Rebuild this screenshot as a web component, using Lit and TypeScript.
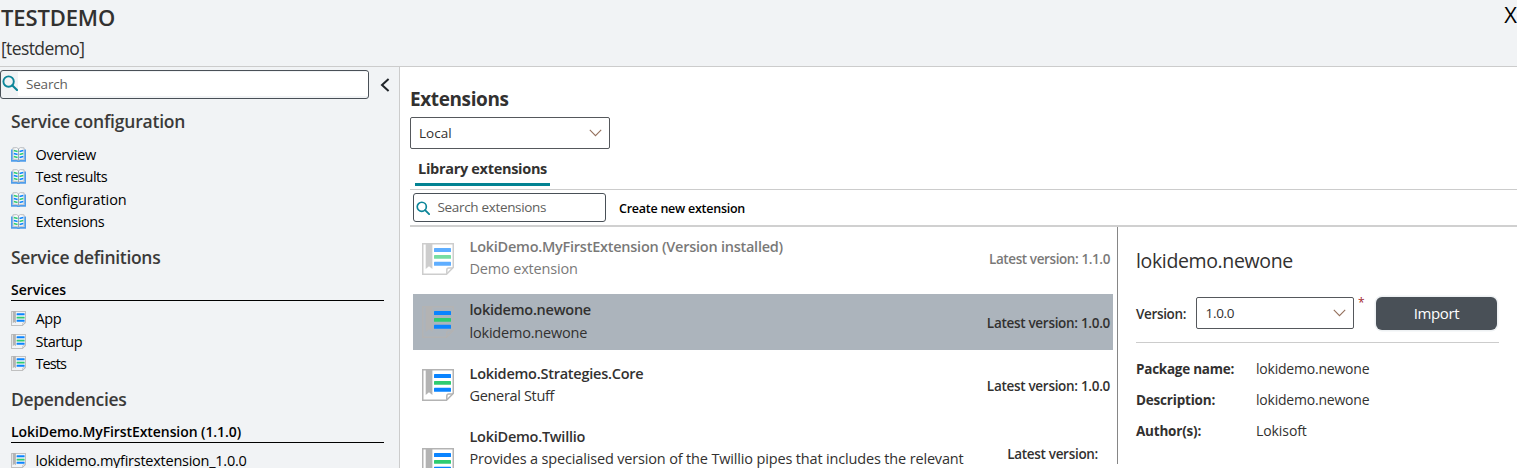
import { LitElement, html, css, svg, unsafeCSS } from "lit";
import { customElement } from "lit/decorators.js";

/* Tracking classes: .k25 tightens the text by 0.25px per letter. */
const tracking = unsafeCSS(
  Array.from({ length: 100 }, (_, i) => `.k${i + 1}{letter-spacing:-${(i + 1) / 100}px}`).join("")
);

const searchIcon = (size: number) => html`
  <svg class="glass" width=${size} height=${size} viewBox="0 0 16 16">
    <circle cx="6.6" cy="6.6" r="5.2" fill="none" stroke="#0c8599" stroke-width="1.9" />
    <path d="M10.4 10.4 L15 15" stroke="#0c8599" stroke-width="2.1" stroke-linecap="round" />
  </svg>`;

const chevronDown = html`
  <svg class="down" width="13" height="8" viewBox="0 0 13 8">
    <path d="M0.8 0.9 L6.5 6.6 L12.2 0.9" fill="none" stroke="#94705c" stroke-width="1.1" />
  </svg>`;

const noteIcon = (size: number) => html`
  <svg class="note" width=${size} height=${size} viewBox="0 0 32 32">
    <path d="M0.75 0.75 H31.25 V24.5 L24.5 31.25 H0.75 Z" fill="none" stroke="#b3b3b3" stroke-width=${size < 20 ? 2 : 1.5} />
    <path d="M24.8 31 V27 Q24.8 25 26.8 25 H31" fill="none" stroke="#b3b3b3" stroke-width="1.5" />
    <path d="M3.7 0 H10.4 V26 L7 23.2 L3.7 26 Z" fill="#b3b3b3" />
    <rect x="12" y="5" width="17" height="4" rx="0.6" fill="#0a84ff" />
    <rect x="12" y="12" width="17" height="3.8" rx="0.6" fill="#2ecc71" />
    <rect x="12" y="18.8" width="17" height="4" rx="0.6" fill="#0a84ff" />
  </svg>`;

const bookLines = [3.4, 6.4, 9.4].map((y, i) => svg`
  <path d="M2.8 ${y} L6.6 ${y + 1}" stroke=${i % 2 ? "#0a84ff" : "#2ecc71"} stroke-width="1.6" />
  <path d="M8.5 ${y + 1} L12.3 ${y}" stroke=${i % 2 ? "#2ecc71" : "#0a84ff"} stroke-width="1.6" />`);

const bookIcon = html`
  <svg class="note" width="15" height="15" viewBox="0 0 15 15">
    <path d="M1.9 0.9 L5.6 0.6 L7.5 1.8 L9.4 0.6 L13.1 0.9 V12.2 L9.2 12.4 L7.5 13.4 L5.8 12.4 L1.9 12.2 Z" fill="#f8f9fa" stroke="#b3b7bb" stroke-width="0.9" />
    <path d="M0.8 2.6 V13.9 H6 L7.5 14.5 L9 13.9 H14.2 V2.6" fill="none" stroke="#4f9dea" stroke-width="1.6" />
    <path d="M7.5 1.8 V13.6" stroke="#9aa6b2" stroke-width="1" />
    ${bookLines}
  </svg>`;

const config = [["Overview", "k31"], ["Test results", "k49"], ["Configuration", "k11"], ["Extensions", "k42"]];
const services = [["App", "k40"], ["Startup", "k48"], ["Tests", "k90"]];
const dependencies = [["lokidemo.myfirstextension_1.0.0", "k25"]];

const extensions = [
  { name: "LokiDemo.MyFirstExtension (Version installed)", nk: "k25", text: "Demo extension", tk: "k18", version: "1.1.0", vk: "k40", state: "installed" },
  { name: "lokidemo.newone", nk: "k24", text: "lokidemo.newone", tk: "k20", version: "1.0.0", vk: "k30", state: "selected" },
  { name: "Lokidemo.Strategies.Core", nk: "k24", text: "General Stuff", tk: "k33", version: "1.0.0", vk: "k30", state: "" },
  { name: "LokiDemo.Twillio", nk: "k26", text: "Provides a specialised version of the Twillio pipes that includes the relevant", tk: "k16", version: "", vk: "k30", state: "tall" },
];

const facts = [
  ["Package name:", "k25", "lokidemo.newone", "k21"],
  ["Description:", "k20", "lokidemo.newone", "k21"],
  ["Author(s):", "k20", "Lokisoft", "k8"],
];

@customElement("app-root")
export class AppRoot extends LitElement {
  static styles = css`
    :host { display: flex; flex-direction: column; height: 468px; overflow: hidden; background: #fff; color: #323130;
      font-family: "Open Sans", "Noto Sans", sans-serif; font-size: 14.5px; white-space: nowrap; }
    * { box-sizing: border-box; margin: 0; }
    svg { display: block; flex: none; }
    .top { display: flex; justify-content: space-between; height: 67px; flex: none; background: #f1f3f5; border-bottom: 1px solid #ccc; }
    .name { font-size: 22px; font-weight: 600; line-height: 35px; padding-left: 1px; }
    .sub { font-size: 17.5px; line-height: 26px; padding-left: 1px; }
    .close { font-size: 22px; line-height: 29px; color: #000; }
    .body { display: flex; flex: 1; min-height: 0; }
    .side { width: 400px; flex: none; background: #f1f3f5; border-right: 1px solid #ccc; padding-top: 3px; color: #000; }
    .row { display: flex; align-items: center; }
    .box { display: flex; align-items: center; height: 29px; border: 1px solid #495057; border-radius: 3px; background: #fff; color: #605e5c; font-size: 13.5px; }
    .side .box { width: 369px; background: #f1f3f5; padding-left: 1px; }
    .side .field { flex: 1; height: 24px; line-height: 25px; background: #fff; padding-left: 8px; align-self: flex-start; margin-top: 1px; }
    .side .glass { margin-top: -3px; }
    .collapse { margin-left: 11px; }
    .side h2 { font-size: 17.5px; font-weight: 600; padding-left: 11px; height: 48px; line-height: 48px; color: #3b3a39; }
    .side h2.first { height: 44.4px; line-height: 45px; }
    .group { margin: 0 15px 6.2px 11px; line-height: 17.6px; height: 20.5px; border-bottom: 1px solid #000; font-size: 14px; font-weight: 600; }
    .item { display: flex; align-items: center; height: 22.4px; padding-left: 11px; gap: 9.5px; }
    .main { flex: 1; min-width: 0; display: flex; flex-direction: column; padding-left: 10px; }
    .title { font-size: 19px; font-weight: 700; line-height: 27px; padding-top: 19px; height: 50px; }
    .select { display: flex; align-items: center; justify-content: space-between; height: 32px; border: 1px solid #55585c; border-radius: 2px; background: #fff; padding: 0 7px 0 8px; font-size: 13.5px; flex: none; }
    .source { width: 200px; }
    .tabs { height: 41px; flex: none; border-bottom: 1px solid #ccc; padding: 3px 0 0 5px; display: flex; align-items: flex-start; }
    .tab { width: 135px; height: 34px; line-height: 33px; border-bottom: 3px solid #038393; padding-left: 3px; font-weight: 700; }
    .tools { display: flex; align-items: center; height: 37px; flex: none; padding: 0 0 1px 3px; border-bottom: 2px solid #d0d0d0; }
    .tools .box { width: 193px; padding-left: 2px; gap: 7.5px; margin-top: 1px; }
    .tools .box span { line-height: 20px; margin-top: -2px; }
    .create { font-size: 12.5px; font-weight: 600; color: #000; margin-left: 13px; padding-top: 2px; }
    .split { display: flex; flex: 1; min-height: 0; }
    .list { width: 707px; flex: none; padding: 3.5px 4px 0 3px; display: flex; flex-direction: column; gap: 7.4px; }
    .ext { display: flex; align-items: center; height: 56px; flex: none; padding: 0 3px 0 9px; }
    .selected { background: #acb4bc; }
    .installed > * { opacity: 0.65; }
    .tall { height: 87px; }
    .words { flex: 1; padding-left: 15.5px; line-height: 22.3px; align-self: flex-start; padding-top: 5.5px; }
    .installed .words { line-height: 22px; }
    .strong { font-weight: 600; }
    .version { font-size: 13.5px; font-weight: 600; padding-top: 1px; }
    .selected .version { padding-top: 2px; }
    .tall .version { padding: 0 12px 21px 0; }
    .divider { width: 1px; height: 237px; background: #868686; }
    .detail { flex: 1; padding: 0 18px 0 18px; }
    .heading { font-size: 19.5px; line-height: 28px; padding-top: 20px; height: 70px; }
    .form { display: flex; align-items: flex-start; height: 46px; border-bottom: 1px solid #ccc; }
    .form .label { font-size: 13.5px; font-weight: 600; width: 60px; line-height: 34px; }
    .pick { width: 158px; padding-left: 8.5px; }
    .star { color: #a4262c; font-size: 12px; line-height: 12px; width: 22px; padding-left: 4px; }
    .import { width: 121px; height: 33px; border-radius: 6px; background: #495057; color: #fff; font-size: 15px; line-height: 32px; text-align: center; box-shadow: 0 0 0 1.5px #eef1f3; }
    .facts { padding-top: 11px; }
    .fact { display: flex; line-height: 31px; font-size: 14px; }
    .fact .key { width: 120px; font-weight: 700; font-size: 13.5px; }
    .fact .value { line-height: 29.5px; height: 31px; }
    ${tracking}
  `;

  private items(list: string[][], icon: unknown) {
    return list.map(([t, k]) => html`<div class="item">${icon}<span class=${k}>${t}</span></div>`);
  }

  render() {
    return html`
      <div class="top">
        <div>
          <div class="name k13">TESTDEMO</div>
          <div class="sub k61">[testdemo]</div>
        </div>
        <div class="close">X</div>
      </div>
      <div class="body">
        <div class="side">
          <div class="row">
            <div class="box">${searchIcon(16)}<span class="field k18">Search</span></div>
            <svg class="collapse" width="10" height="14" viewBox="0 0 10 14">
              <path d="M8.6 1 L2 7 L8.6 13" fill="none" stroke="#212529" stroke-width="2" />
            </svg>
          </div>
          <h2 class="first k21">Service configuration</h2>
          ${this.items(config, bookIcon)}
          <h2 class="k30">Service definitions</h2>
          <div class="group">Services</div>
          ${this.items(services, noteIcon(15))}
          <h2 class="k32">Dependencies</h2>
          <div class="group k8">LokiDemo.MyFirstExtension (1.1.0)</div>
          ${this.items(dependencies, noteIcon(15))}
        </div>
        <div class="main">
          <div class="title k40">Extensions</div>
          <div class="select source"><span>Local</span>${chevronDown}</div>
          <div class="tabs"><div class="tab k30">Library extensions</div></div>
          <div class="tools">
            <div class="box">${searchIcon(14)}<span class="k33">Search extensions</span></div>
            <div class="create k25">Create new extension</div>
          </div>
          <div class="split">
            <div class="list">
              ${extensions.map((e) => html`
                <div class="ext ${e.state}">
                  ${noteIcon(32)}
                  <div class="words">
                    <div class="strong ${e.nk}">${e.name}</div>
                    <div class=${e.tk}>${e.text}</div>
                  </div>
                  <div class="version ${e.vk}">Latest version: ${e.version}</div>
                </div>`)}
            </div>
            <div class="divider"></div>
            <div class="detail">
              <div class="heading k36">lokidemo.newone</div>
              <div class="form">
                <div class="label k35">Version:</div>
                <div class="select pick"><span class="k32">1.0.0</span>${chevronDown}</div>
                <div class="star">*</div>
                <div class="import k40">Import</div>
              </div>
              <div class="facts">
                ${facts.map(([k, kk, v, vk]) => html`
                  <div class="fact"><span class="key ${kk}">${k}</span><span class="value ${vk}">${v}</span></div>`)}
              </div>
            </div>
          </div>
        </div>
      </div>`;
  }
}
